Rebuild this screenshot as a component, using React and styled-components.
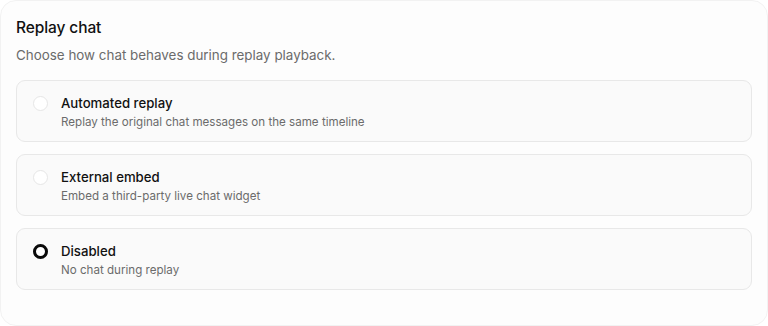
import styled, { createGlobalStyle } from "styled-components";

const GlobalStyle = createGlobalStyle`
  html, body {
    margin: 0;
    padding: 0;
    background: #ffffff;
  }
  body {
    font-family: Inter, "Noto Sans", "Liberation Sans", sans-serif;
    -webkit-font-smoothing: antialiased;
  }
`;

const Card = styled.section`
  box-sizing: border-box;
  width: 768px;
  height: 326px;
  background: #fdfdfd;
  border: 1px solid #f2f2f2;
  border-radius: 16px;
  padding: 17px 15px 0 15px;
`;

const Title = styled.h2`
  margin: 0;
  font-size: 15.5px;
  line-height: 20px;
  font-weight: 500;
  color: #111111;
  letter-spacing: -0.1px;
`;

const Subtitle = styled.p`
  margin: 8px 0 0 0;
  font-size: 13.4px;
  line-height: 18px;
  color: #6b6b6b;
`;

const Options = styled.div`
  display: flex;
  flex-direction: column;
  gap: 12px;
  margin-top: 16px;
`;

const Option = styled.label`
  box-sizing: border-box;
  height: 62px;
  display: flex;
  align-items: flex-start;
  gap: 13px;
  padding: 14px 16px;
  background: #fafafa;
  border: 1px solid #e8e8e8;
  border-radius: 9px;
  cursor: pointer;
`;

const Radio = styled.span`
  box-sizing: border-box;
  flex: none;
  width: 15px;
  height: 15px;
  margin-top: 1px;
  border-radius: 50%;
  background: #ffffff;
  border: ${({ $checked }) => ($checked ? "3.5px solid #0a0a0a" : "1px solid #e6e6e6")};
`;

const Text = styled.div`
  display: flex;
  flex-direction: column;
`;

const Label = styled.span`
  font-size: 13.2px;
  line-height: 17px;
  font-weight: 500;
  color: #111111;
`;

const Desc = styled.span`
  margin-top: 2px;
  font-size: 11.6px;
  line-height: 16px;
  color: #6b6b6b;
`;

const options = [
  { id: "auto", label: "Automated replay", desc: "Replay the original chat messages on the same timeline" },
  { id: "embed", label: "External embed", desc: "Embed a third-party live chat widget" },
  { id: "off", label: "Disabled", desc: "No chat during replay" },
];

const App = () => {
  const selected = "off";
  return (
    <>
      <GlobalStyle />
      <Card>
        <Title>Replay chat</Title>
        <Subtitle>Choose how chat behaves during replay playback.</Subtitle>
        <Options>
          {options.map((o) => (
            <Option key={o.id}>
              <Radio $checked={o.id === selected} />
              <Text>
                <Label>{o.label}</Label>
                <Desc>{o.desc}</Desc>
              </Text>
            </Option>
          ))}
        </Options>
      </Card>
    </>
  );
};

export default App;
